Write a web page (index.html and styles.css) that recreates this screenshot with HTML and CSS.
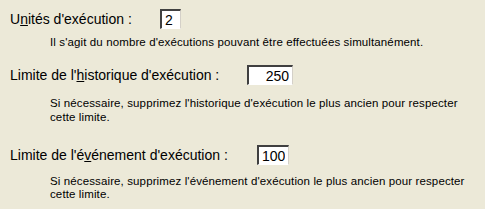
FILE: index.html
```html
<!DOCTYPE html>
<html>

<head>
  <meta charset="UTF-8">
  <meta name="viewport" content="width=device-width, initial-scale=1.0">
  <title>Options d'exécution</title>
  <link rel="stylesheet" href="styles.css">
</head>

<body>
  <div class="panel">
    <div class="group group-units">
      <div class="field-row">
        <label class="label label-units" for="units">U<u>n</u>ités d'exécution :</label>
        <input class="field field-units" id="units" type="text" value="2">
      </div>
      <p class="hint">Il s'agit du nombre d'exécutions pouvant être effectuées simultanément.</p>
    </div>

    <div class="group group-history">
      <div class="field-row">
        <label class="label label-history" for="history">Limite de l'<u>h</u>istorique d'exécution :</label>
        <input class="field field-history" id="history" type="text" value="250">
      </div>
      <p class="hint">Si nécessaire, supprimez l'historique d'exécution le plus ancien pour respecter<br>cette limite.</p>
    </div>

    <div class="group group-event">
      <div class="field-row">
        <label class="label label-event" for="event">Limite de l'é<u>v</u>énement d'exécution :</label>
        <input class="field field-event" id="event" type="text" value="100">
      </div>
      <p class="hint">Si nécessaire, supprimez l'événement d'exécution le plus ancien pour respecter<br>cette limite.</p>
    </div>
  </div>
</body>

</html>
```

FILE: styles.css
```css
body {
  margin: 0;
  background-color: #ece9d8;
  font-family: "Liberation Sans", Arial, sans-serif;
  color: #000;
}

.panel {
  padding: 9px 0 0 10px;
}

.field-row {
  display: flex;
  align-items: center;
  height: 20px;
}

.label {
  font-size: 14px;
  white-space: nowrap;
}

.label-units {
  width: 150px;
}

.label-history {
  width: 237px;
}

.label-event {
  width: 247px;
}

.field {
  box-sizing: border-box;
  height: 20px;
  margin: 0;
  padding: 0 3px;
  font-family: "Liberation Sans", Arial, sans-serif;
  font-size: 14px;
  color: #000;
  background-color: #fff;
  border-top: 2px solid #404040;
  border-left: 2px solid #404040;
  border-right: 1px solid #d4d0c8;
  border-bottom: 1px solid #fff;
  outline: none;
}

.field-units {
  width: 21px;
}

.field-history {
  width: 46px;
  text-align: right;
}

.field-event {
  width: 32px;
}

.hint {
  margin: 7px 0 0 40px;
  font-size: 11.5px;
  line-height: 13px;
  letter-spacing: 0.12px;
  white-space: nowrap;
}

.group-history {
  margin-top: 16px;
}

.group-history .hint {
  margin-top: 11px;
  line-height: 14px;
}

.group-event {
  margin-top: 21px;
}

.group-event .hint {
  margin-top: 10px;
}
```
